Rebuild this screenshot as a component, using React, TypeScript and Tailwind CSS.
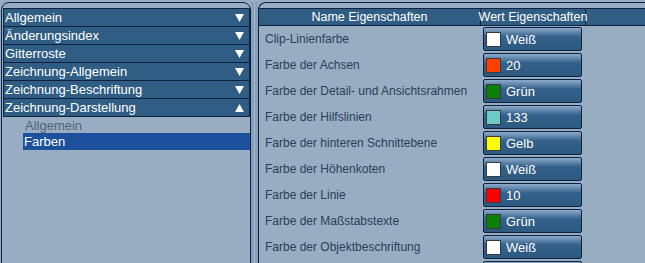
const groups = [
    { label: 'Allgemein', open: false },
    { label: 'Änderungsindex', open: false },
    { label: 'Gitterroste', open: false },
    { label: 'Zeichnung-Allgemein', open: false },
    { label: 'Zeichnung-Beschriftung', open: false },
    { label: 'Zeichnung-Darstellung', open: true },
];

const rows = [
    { name: 'Clip-Linienfarbe', value: 'Weiß', color: '#ffffff' },
    { name: 'Farbe der Achsen', value: '20', color: '#ff3f00' },
    { name: 'Farbe der Detail- und Ansichtsrahmen', value: 'Grün', color: '#0a7f0a' },
    { name: 'Farbe der Hilfslinien', value: '133', color: '#6fcaca' },
    { name: 'Farbe der hinteren Schnittebene', value: 'Gelb', color: '#ffff00' },
    { name: 'Farbe der Höhenkoten', value: 'Weiß', color: '#ffffff' },
    { name: 'Farbe der Linie', value: '10', color: '#ff0000' },
    { name: 'Farbe der Maßstabstexte', value: 'Grün', color: '#0a7f0a' },
    { name: 'Farbe der Objektbeschriftung', value: 'Weiß', color: '#ffffff' },
];

function Arrow({ up }: { up: boolean }) {
    return (
        <svg width="9" height="8" viewBox="0 0 9 8">
            <path d={up ? 'M4.5 0 L9 8 L0 8 Z' : 'M0 0 L9 0 L4.5 8 Z'} fill="#ffffff" />
        </svg>
    );
}

function ValueButton({ color, value }: { color?: string; value?: string }) {
    return (
        <div className="h-[24px] w-[99px] border border-[#0c2240] rounded-[2px] bg-gradient-to-b from-[#8eaccb] via-[#34618a] via-40% to-[#2c5a80] flex items-center pl-[2px] gap-[5px]">
            {color && <div className="w-[15px] h-[15px] border border-[#3a3a3a]" style={{ backgroundColor: color }} />}
            {value && <span className="text-white text-[13px] leading-none">{value}</span>}
        </div>
    );
}

export default function App() {
    return (
        <div
            className="w-[645px] h-[263px] overflow-hidden bg-[#98adc2] flex pt-[2px] pl-[1px] text-[12px]"
            style={{ fontFamily: '"Liberation Sans", Arial, sans-serif' }}
        >
            {/* --- LEFT: ACCORDION --- */}
            <div className="w-[250px] h-[280px] shrink-0 border border-[#0c2240] rounded-t-[8px] pt-[5px] pl-[1px]">
                <div className="border-t border-[#0c2240]">
                    {groups.map((g) => (
                        <div
                            key={g.label}
                            className="h-[18px] bg-[#2f5d84] border-x border-b border-[#0c2240] flex items-center justify-between pl-[1px] pr-[5px] text-white text-[13px] leading-none"
                        >
                            <span>{g.label}</span>
                            <Arrow up={g.open} />
                        </div>
                    ))}
                </div>
                <div className="pl-[20px] pt-[1px]">
                    <div className="h-[14px] flex items-center pl-[2px] text-[#4f6479] text-[13px] leading-none">Allgemein</div>
                    <div className="h-[17px] mt-[1px] flex items-center pl-[1px] bg-[#1c4f9c] text-white text-[13px] leading-none">Farben</div>
                </div>
            </div>

            {/* splitter */}
            <div className="w-[7px] shrink-0 bg-[#86a0b9] flex justify-center">
                <div className="w-[1px] bg-[#a3b8cc]" />
            </div>

            {/* --- RIGHT: PROPERTY GRID --- */}
            <div className="flex-1 h-[280px] border border-[#0c2240] border-r-0 rounded-tl-[8px] pt-[5px]">
                <div className="h-[18px] bg-[#2f5d84] border-y border-[#0c2240] flex text-white text-[12.5px] leading-none whitespace-nowrap">
                    <div className="w-[222px] flex items-center justify-center border-r border-[#0c2240]">Name Eigenschaften</div>
                    <div className="w-[105px] flex items-center justify-center border-r border-[#0c2240]">Wert Eigenschaften</div>
                    <div className="flex-1" />
                </div>
                {rows.map((r, i) => (
                    <div key={i} className="h-[26px] flex items-center">
                        <div className="w-[224px] pl-[6px] text-[#2a3f56] whitespace-nowrap">{r.name}</div>
                        <ValueButton color={r.color} value={r.value} />
                    </div>
                ))}
                {/* next row, only its top edge is in view */}
                <div className="h-[26px] flex items-center">
                    <div className="w-[224px]" />
                    <ValueButton />
                </div>
            </div>
        </div>
    );
}
